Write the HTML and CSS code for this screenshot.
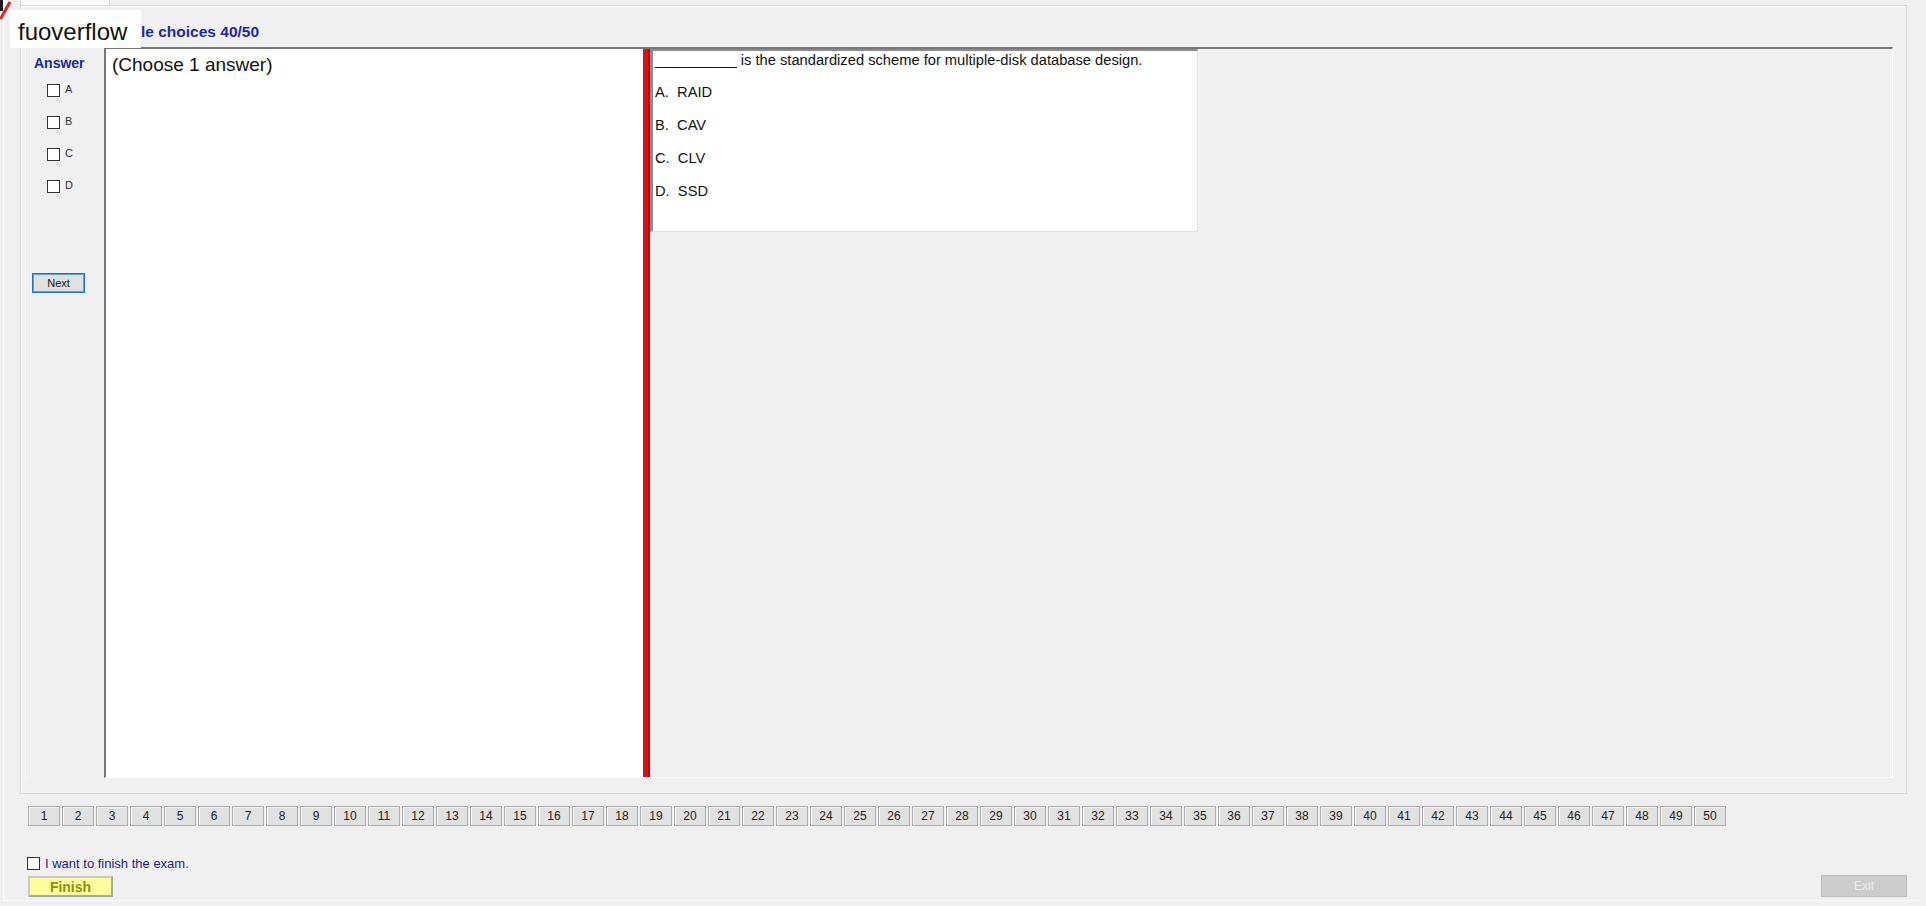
FILE: index.html
```html
<!DOCTYPE html>
<html lang="en">
<head>
<meta charset="utf-8">
<title>Exam</title>
<link rel="stylesheet" href="styles.css">
</head>
<body>
<div class="frame">
  <div class="tabstrip"><div class="tab"></div></div>
  <div class="tabpanel">
    <div class="title">le choices 40/50</div>
    <div class="content">
      <div class="answer-col">
        <div class="answer-head">Answer</div>
        <div class="opt"><span class="cb"></span><span class="opt-label">A</span></div>
        <div class="opt"><span class="cb"></span><span class="opt-label">B</span></div>
        <div class="opt"><span class="cb"></span><span class="opt-label">C</span></div>
        <div class="opt"><span class="cb"></span><span class="opt-label">D</span></div>
        <button class="next">Next</button>
      </div>
      <div class="split">
        <div class="choose">(Choose 1 answer)</div>
        <div class="splitter"></div>
        <div class="qarea">
          <div class="qbox">
            <div class="qtext">__________ is the standardized scheme for multiple-disk database design.</div>
            <div class="qopt first">A.&nbsp; RAID</div>
            <div class="qopt">B.&nbsp; CAV</div>
            <div class="qopt">C.&nbsp; CLV</div>
            <div class="qopt">D.&nbsp; SSD</div>
          </div>
        </div>
      </div>
    </div>
  </div>
  <div class="qnums">
    <button class="qn">1</button><button class="qn">2</button><button class="qn">3</button><button class="qn">4</button><button class="qn">5</button><button class="qn">6</button><button class="qn">7</button><button class="qn">8</button><button class="qn">9</button><button class="qn">10</button>
    <button class="qn">11</button><button class="qn">12</button><button class="qn">13</button><button class="qn">14</button><button class="qn">15</button><button class="qn">16</button><button class="qn">17</button><button class="qn">18</button><button class="qn">19</button><button class="qn">20</button>
    <button class="qn">21</button><button class="qn">22</button><button class="qn">23</button><button class="qn">24</button><button class="qn">25</button><button class="qn">26</button><button class="qn">27</button><button class="qn">28</button><button class="qn">29</button><button class="qn">30</button>
    <button class="qn">31</button><button class="qn">32</button><button class="qn">33</button><button class="qn">34</button><button class="qn">35</button><button class="qn">36</button><button class="qn">37</button><button class="qn">38</button><button class="qn">39</button><button class="qn">40</button>
    <button class="qn">41</button><button class="qn">42</button><button class="qn">43</button><button class="qn">44</button><button class="qn">45</button><button class="qn">46</button><button class="qn">47</button><button class="qn">48</button><button class="qn">49</button><button class="qn">50</button>
  </div>
  <div class="finish-check"><span class="cb"></span><span class="finish-text">I want to finish the exam.</span></div>
  <div class="actions">
    <button class="finish">Finish</button>
    <button class="exit">Exit</button>
  </div>
</div>
<div class="watermark">fuoverflow</div>
<svg class="corner" width="14" height="22" viewBox="0 0 14 22"><rect x="0" y="0" width="3" height="11" fill="#1a1a1a"/><line x1="0.5" y1="19" x2="10" y2="2" stroke="#d42a2a" stroke-width="3"/></svg>
</body>
</html>
```
FILE: styles.css
```css
html, body {
  margin: 0;
  padding: 0;
}
body {
  background: #f0f0f0;
  font-family: "Liberation Sans", Arial, sans-serif;
  width: 1926px;
  height: 906px;
  overflow: hidden;
  position: relative;
}
.frame {
  margin-left: 3px;
  width: 1917px;
  height: 901px;
  box-sizing: border-box;
  border-left: 1px solid #fbfbfb;
  border-bottom: 1px solid #fbfbfb;
  padding-left: 16px;
}
.tabstrip {
  height: 5px;
  display: flex;
}
.tab {
  width: 90px;
  height: 5px;
  box-sizing: border-box;
  background: #fbfbfb;
  border-left: 1px solid #d6d6d6;
  border-right: 1px solid #d6d6d6;
}
.tabpanel {
  width: 1887px;
  height: 789px;
  box-sizing: border-box;
  border: 1px solid #d9d9d9;
  box-shadow: inset 1px 1px 0 #ffffff;
}
.title {
  height: 41px;
  box-sizing: border-box;
  padding: 17px 0 0 120px;
  font-size: 15.5px;
  line-height: 18px;
  font-weight: bold;
  color: #1d2a9c;
}
.content {
  display: flex;
  margin-left: 4px;
  width: 1868px;
  height: 731px;
}
.answer-col {
  width: 79px;
  box-sizing: border-box;
  padding-top: 8px;
  border-left: 1px solid #fafafa;
  display: flex;
  flex-direction: column;
}
.answer-head {
  padding-left: 8px;
  font-size: 14px;
  line-height: 16px;
  font-weight: bold;
  color: #1d2a9c;
  margin-bottom: 3px;
}
.opt {
  height: 32px;
  display: flex;
  align-items: center;
  padding-left: 21px;
  gap: 5px;
}
.cb {
  display: inline-block;
  flex: none;
  width: 13px;
  height: 13px;
  box-sizing: border-box;
  border: 1px solid #333333;
  background: #ffffff;
}
.opt-label {
  font-size: 11px;
  color: #333333;
  margin-top: -3px;
}
.next {
  margin: 71px 0 0 6px;
  width: 53px;
  height: 20px;
  padding: 0;
  box-sizing: border-box;
  background: #e1e1e1;
  border: 1px solid #1f72c4;
  box-shadow: inset 0 0 0 1px #5d9fdd;
  font-family: "Liberation Sans", Arial, sans-serif;
  font-size: 11px;
  color: #111111;
}
.split {
  flex: 1;
  display: flex;
  box-sizing: border-box;
  border-top: 2px solid #777777;
  border-left: 2px solid #777777;
  border-right: 1px solid #ffffff;
  border-bottom: 1px solid #ffffff;
}
.choose {
  width: 537px;
  background: #ffffff;
  box-sizing: border-box;
  padding: 5px 0 0 6px;
  font-size: 19px;
  line-height: 22px;
  color: #111111;
}
.splitter {
  width: 7px;
  box-sizing: border-box;
  background: #e10f0f;
  border-right: 2px solid #b30a0a;
}
.qarea {
  flex: 1;
  background: #f0f0f0;
}
.qbox {
  width: 548px;
  height: 183px;
  box-sizing: border-box;
  background: #ffffff;
  border-left: 3px solid #8c8c8c;
  border-top: 2px solid #8c8c8c;
  border-right: 1px solid #e2e2e2;
  border-bottom: 1px solid #e2e2e2;
  padding: 1px 0 0 2px;
  font-size: 14.7px;
  color: #111111;
}
.qtext {
  line-height: 16px;
}
.qopt {
  height: 33px;
  line-height: 33px;
}
.qopt.first {
  margin-top: 8px;
}
.qnums {
  margin-top: 12px;
  padding-left: 8px;
  display: flex;
  gap: 2px;
  height: 20px;
}
.qn {
  width: 32px;
  height: 20px;
  padding: 0;
  box-sizing: border-box;
  background: #e1e1e1;
  border: 1px solid #adadad;
  box-shadow: inset 1px 1px 0 #f6f6f6;
  font-family: "Liberation Sans", Arial, sans-serif;
  font-size: 12px;
  color: #222222;
}
.finish-check {
  margin-top: 30px;
  height: 14px;
  padding-left: 7px;
  display: flex;
  align-items: center;
  gap: 5px;
}
.finish-text {
  font-size: 13px;
  color: #1c1c8c;
}
.actions {
  margin-top: 5px;
  width: 1887px;
  height: 22px;
  display: flex;
  justify-content: space-between;
  align-items: flex-end;
}
.finish {
  margin-left: 8px;
  width: 85px;
  height: 21px;
  padding: 0;
  box-sizing: border-box;
  background: #fdfd9c;
  border: 2px solid #a8a8a8;
  border-top-color: #c9c9c9;
  border-left-color: #c9c9c9;
  font-family: "Liberation Sans", Arial, sans-serif;
  font-size: 14px;
  font-weight: bold;
  color: #8f8f10;
}
.exit {
  width: 86px;
  height: 22px;
  padding: 0;
  box-sizing: border-box;
  background: #cccccc;
  border: 1px solid #bdbdbd;
  font-family: "Liberation Sans", Arial, sans-serif;
  font-size: 12px;
  color: #ececec;
}
.watermark {
  position: absolute;
  left: 10px;
  top: 10px;
  width: 131px;
  height: 35px;
  box-sizing: content-box;
  padding: 3px 0 0 0;
  background: #ffffff;
  font-size: 24px;
  line-height: 38px;
  text-indent: 8px;
  color: #111111;
}
.corner {
  position: absolute;
  left: 0;
  top: 0;
}
```
